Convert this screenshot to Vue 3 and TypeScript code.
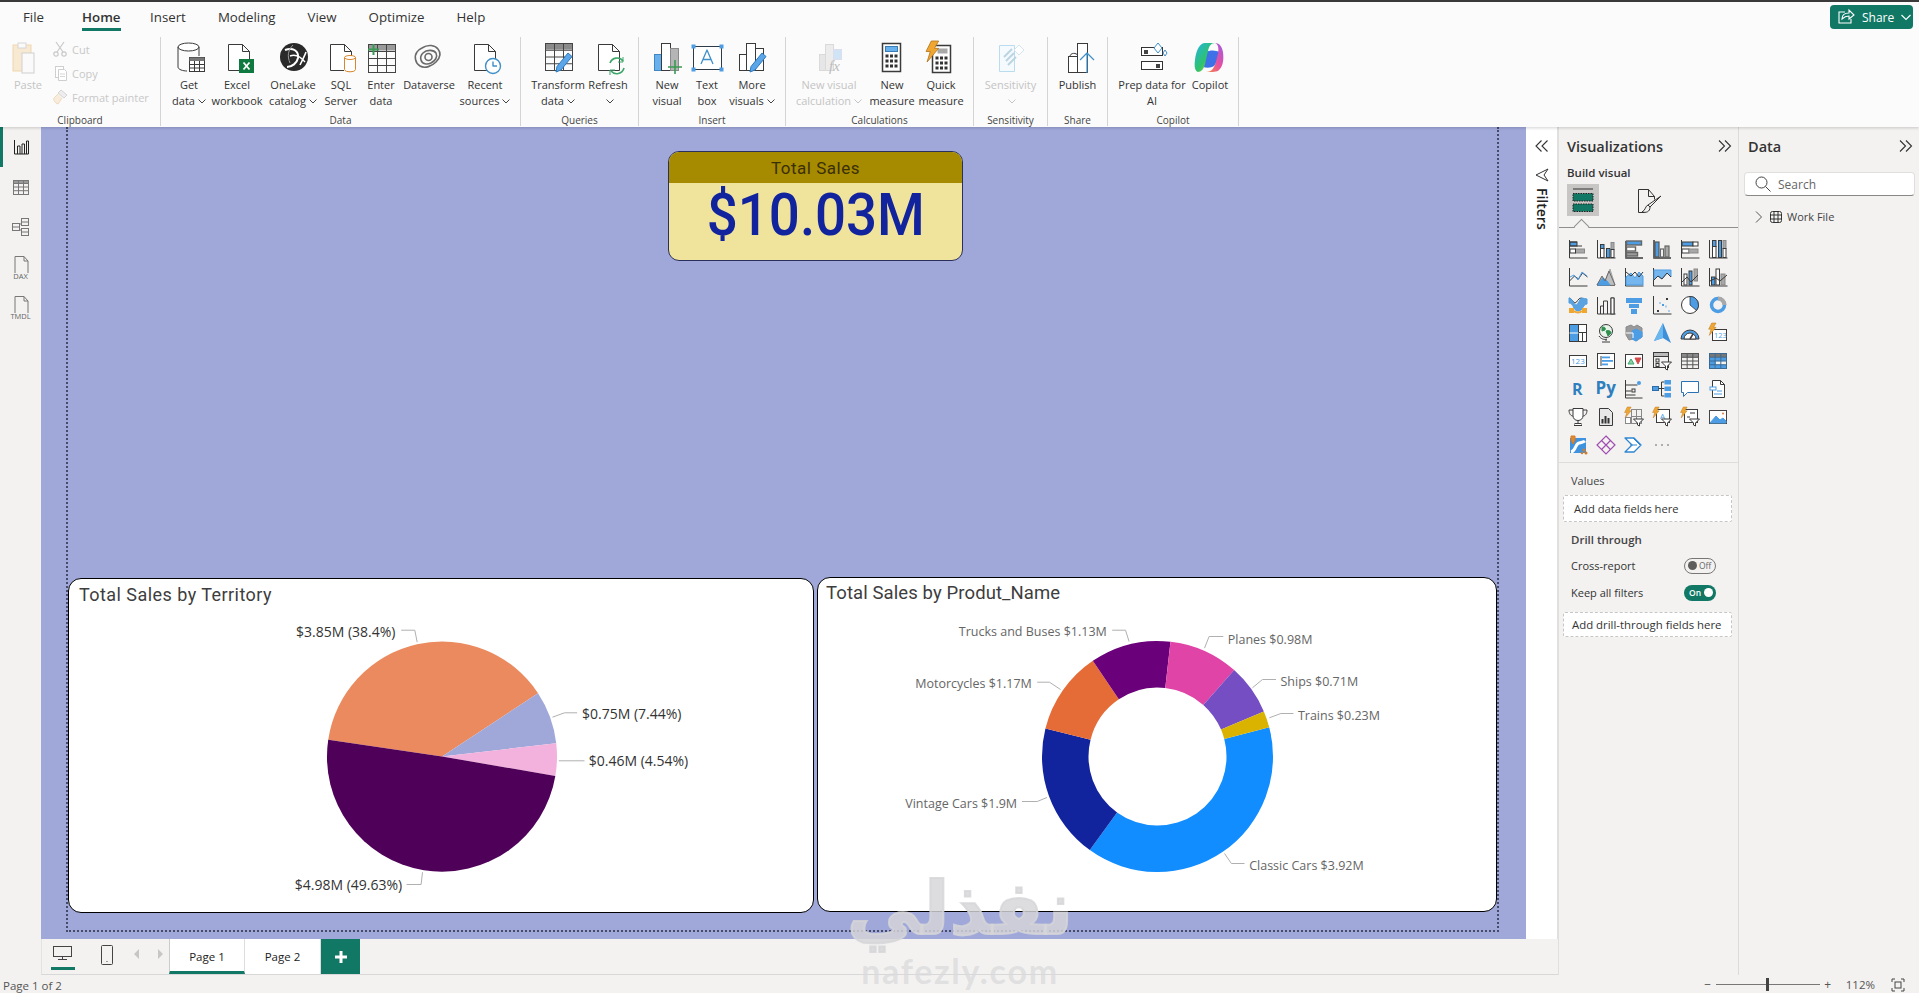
<script setup lang="ts">
const D = '#3a3a3a'
const B = '#4c9de3'
const G = '#a8a8a8'
const Y = '#f0a732'
const W = '#ffffff'
const r = (x: number, y: number, w: number, h: number, f = 'none', s = 'none', sw = 1) =>
  `<rect x="${x}" y="${y}" width="${w}" height="${h}" fill="${f}" stroke="${s}" stroke-width="${sw}"/>`
const p = (d: string, s = D, f = 'none', sw = 1) =>
  `<path d="${d}" stroke="${s}" fill="${f}" stroke-width="${sw}" stroke-linejoin="round"/>`
const c = (x: number, y: number, rad: number, f = 'none', s = 'none', sw = 1) =>
  `<circle cx="${x}" cy="${y}" r="${rad}" fill="${f}" stroke="${s}" stroke-width="${sw}"/>`
const t = (x: number, y: number, s: string, size: number, f: string, extra = '') =>
  `<text x="${x}" y="${y}" font-size="${size}" fill="${f}" font-family="'Open Sans',sans-serif" ${extra}>${s}</text>`

const doc = (x: number, col = D) => p(`M${x + .5} 2.5h14l7 7v19h-21zM${x + 14.5} 2.5v7h7`, col, W)
const cyl = (x: number, y: number, w: number, h: number, col: string) =>
  `<ellipse cx="${x + w / 2}" cy="${y + 2}" rx="${w / 2}" ry="2" fill="none" stroke="${col}"/>` +
  p(`M${x} ${y + 2}v${h - 4}c0 3 ${w} 3 ${w} 0v-${h - 4}`, col, 'none', 1)
const grid = (x: number, y: number, w: number, h: number, cols: number, rows: number, col = D) => {
  let s = r(x + .5, y + .5, w, h, 'none', col)
  for (let i = 1; i < cols; i++) s += p(`M${x + .5 + (w * i) / cols} ${y}v${h}`, col)
  for (let i = 1; i < rows; i++) s += p(`M${x} ${y + .5 + (h * i) / rows}h${w}`, col)
  return s
}
const bolt = (x: number, y: number, k = 1, f = Y) =>
  `<path transform="translate(${x} ${y}) scale(${k})" d="M6 0h7L9 7h4L2 20l3-10H1z" fill="${f}" stroke="#b5761c" stroke-width=".8"/>`
const pencil = (x: number, y: number) =>
  `<path transform="translate(${x} ${y})" d="M12 0l4 3.500L5 17l-5 2 1-5.500z" fill="#5aa6e8" stroke="#2e79bd"/>`

const rib: Record<string, string> = {
  paste: r(1, 3, 18, 26, '#f8e9d2', '#efd6b0') + r(6, 1, 8, 5, '#fafafa', '#d6d6d6') + r(10, 11, 12, 20, '#fafafa', '#cfcfcf'),
  getdata: `<ellipse cx="15.500" cy="5" rx="10.500" ry="4" fill="#fff" stroke="${D}"/>` + p('M5 5v20c0 2.500 5 4 9 4', D) + p('M26 5v9', D) + r(16.5, 15.5, 15, 14, W, D) + r(16.5, 15.5, 15, 3.5, '#777') + p('M21.500 19v10M26.500 19v10M17 22.500h14M17 26h14', D),
  excel: doc(7) + r(18, 17, 15, 14, '#10793f') + p('M22.500 20.500l6 7M28.500 20.500l-6 7', W, 'none', 1.8),
  onelake: c(17, 15, 14, '#2a2a2a') + p('M8 8c8-3 14 1 13 8-1 5-6 9-11 9', W, 'none', 2) + p('M16 3c-5 5-6 11-3 18', '#9a9a9a', 'none', 1) + p('M23 23c3-6 5-10 6-13', W, 'none', 1.600) + p('M13 14c5-2 10 0 15 6', W, 'none', 1.400),
  sql: doc(5) + r(19, 14, 12, 16, W) + cyl(19.5, 13.5, 11, 16, '#d9862c'),
  enter: r(3.5, 2.5, 27, 6, '#9a9a9a') + grid(3, 2, 27, 28, 3, 4, '#444') + p('M8.500 2v11M3 7.500h11', '#3a9a54', 'none', 2),
  dataverse: `<g fill="none" stroke="#6a6a6a" stroke-width="1.600"><path d="M9 6c6-4 13-3 16 1 4 5 1 10-2 13-4 4-11 7-16 4C2 21 1 14 4 10c1-2 3-3 5-4z"/><path d="M10 11c4-4 11-3 13 0 2 4-1 8-5 10-4 2-9 1-10-3-1-3 0-5 2-7z"/><circle cx="15.500" cy="15" r="3.500"/></g>`,
  recent: doc(5) + c(24, 24, 7.5, W, '#3f8fc9', 1.400) + p('M24 19.500v4.500h4', '#3f8fc9', 'none', 1.400),
  transform: r(3.5, 1.5, 27, 6, '#8a8a8a') + grid(3, 1, 27, 27, 3, 4, '#444') + pencil(14, 11),
  refresh: doc(6) + `<g fill="none" stroke="#3fa66b" stroke-width="1.600"><path d="M18 21a7.500 7.500 0 0 1 13-2"/><path d="M32 26a7.500 7.500 0 0 1-13 3"/></g>` + p('M31 15v5h-5', '#3fa66b') + p('M18 33v-5h5', '#3fa66b'),
  newvisual: r(3.5, 12.5, 7, 16, '#69b1ec', '#3d87c6') + r(10.5, 1.5, 9, 27, W, D) + r(19.5, 6.5, 8, 22, '#b5b5b5', '#8a8a8a') + p('M24 18v14M17 25h14', '#3a9a54', 'none', 1.600),
  textbox: r(2.5, 4.5, 28, 23, W, '#2e3a46', 1) + r(.5, 2.5, 4, 4, B) + r(28.5, 2.5, 4, 4, B) + r(.5, 25.5, 4, 4, B) + r(28.5, 25.5, 4, 4, B) + p('M10 22l6-14 6 14M12 17.500h8', '#3f8fc9', 'none', 1.300),
  more: r(3.5, 12.5, 7, 16, W, D) + r(10.5, 1.5, 9, 27, W, D) + r(19.5, 6.5, 8, 22, W, D) + pencil(14, 11),
  calc: r(6.5, 12.5, 6, 16, '#e6e6e6', '#dadada') + r(12.5, 2.5, 8, 26, '#ececec', '#dadada') + r(20.5, 7.5, 8, 10, '#cfe4f5', '#dde') + t(16, 29, 'fx', 15, '#bdbdbd', `font-style="italic" style="font-family:'Liberation Serif',serif"`),
  measure: r(6.5, 1.5, 18, 28, W, D, 1.500) + r(9.5, 4.5, 12, 5, '#69b1ec', '#3a7cb5') + Array.from({ length: 9 }, (_, i) => r(9.5 + (i % 3) * 4.5, 12.5 + Math.floor(i / 3) * 5, 3, 3, '#333')).join(''),
  quick: r(7.5, 3.5, 18, 27, W, D, 1.500) + r(12.5, 6.5, 10, 5, '#a8a8a8') + Array.from({ length: 9 }, (_, i) => r(10.5 + (i % 3) * 4.5, 14.5 + Math.floor(i / 3) * 5, 3, 3, '#333')).join('') + bolt(0, -1, 1.05),
  sens: p('M4.500 3.500h15v26h-15z', '#b9dcef', '#f4fafd') + p('M9 15l8-8M11 19l8-8M13 23l8-8', '#bcd4e2', 'none', 2) + p('M19 8l5-5 5 5-5 5z', '#d4e4ee', W),
  publish: r(6.5, 14.5, 9, 16, W, D) + r(15.5, 1.5, 10, 29, W, D) + p('M8 14.500c0-4 7-4 7.500-1', D) + p('M25 31V11M18 18l7-7 7 7', '#3f8fc9', 'none', 1.200),
  prep: r(5.5, 5.5, 21, 8, W, '#333') + r(8, 8, 4, 4, '#444') + r(5.5, 19.500, 21, 8, W, '#333') + r(20, 22, 4, 4, '#444') + p('M22 1l4 5-4 5-4-5zM29 8l2 3-2 3-2-3z', '#3f8fc9', W),
  copilot: `<defs><linearGradient id="cpa" x1="0" y1="0" x2="1" y2="1"><stop offset="0" stop-color="#23b3e8"/><stop offset=".55" stop-color="#2fc36a"/><stop offset="1" stop-color="#f4d21f"/></linearGradient><linearGradient id="cpb" x1="1" y1="0" x2="0" y2="1"><stop offset="0" stop-color="#9a5ee8"/><stop offset=".5" stop-color="#e84e9f"/><stop offset="1" stop-color="#f58a3c"/></linearGradient></defs><path d="M12 10c4-2 9-2 14 0-2 5-3 11-6 14-3 2-7 2-11 1 2-4 2-10 3-15z" fill="#3e70e8"/><path d="M11 1h10c-4 0-6 3-7 8l-3 13c-1 5-4 8-7 8-3-1-4-5-3-12C2 8 6 1 11 1z" fill="url(#cpa)"/><path d="M21 1c5 0 7 4 8 9 1 8 0 14-4 18-2 2-6 2-13 2 6 0 8-4 10-10l2-9c1-5 0-9-3-10z" fill="url(#cpb)"/>`,
}

const sm: Record<string, string> = {
  cut: `<g fill="none" stroke="#c9c9c9" stroke-width="1.200"><path d="M4 1l7 10M12 1L5 11"/><circle cx="4" cy="13" r="2.200"/><circle cx="12" cy="13" r="2.200" /></g>`,
  copy: r(3.5, 1.5, 8, 11, W, '#cfcfcf') + p('M6.500 4.500h6l2 2v9h-8z', '#cfcfcf', W) + p('M8 9h5M8 11.500h5', '#d6d6d6'),
  paint: p('M9 1l6 5-3 3-6-5z', '#d5d5d5', '#eee') + p('M6 5L2 9c-1 2 1 5 4 6l4-6', '#f0d9ba', '#f8eddc'),
}

const axis = p('M1.500 1v18h18')
const vi: string[] = [
  axis + r(2, 3, 7, 4, B, D) + r(9, 3, 0, 4) + p('M2 7h12', D) + r(7.500, 10, 9, 4, G, '#888') + r(2, 10, 5.5, 4, W, D) + p('M2 3h7', D),
  axis + r(4.5, 9.5, 3.500, 9, W, D) + r(4.5, 5.5, 3.500, 4, B, D) + r(10.5, 9.5, 3.500, 9, B, D) + r(15, 3.5, 3, 7, G, '#888') + r(15, 10.500, 3, 8, W, D),
  p('M2 2v17h17', '#666', 'none', 2) + r(2.5, 2, 15, 4, B, '#666', 1.400) + r(2.5, 8, 9, 4, W, '#666', 1.400) + r(2.500, 13.5, 11, 3.500, '#9a9a9a', '#666', 1.400),
  p('M2 1v18h17', '#666', 'none', 2) + r(3, 3, 4, 15, B, '#555', 1.200) + r(8.5, 10, 3, 8, W, '#666', 1.200) + r(13, 7, 4, 11, G, '#666', 1.200),
  axis + r(2, 3, 11, 4, B, D) + r(13, 3, 5, 4, W, D) + r(2, 10, 7, 4, W, D) + r(9, 10, 9, 4, G, '#888'),
  axis + r(4.5, 7.5, 3.500, 11, W, D) + r(4.5, 1.5, 3.500, 6, B, D) + r(10.5, 1.5, 3, 17, B, D) + r(15, 1.5, 3, 8, G, '#888') + r(15, 9.500, 3, 9, W, D),
  axis + p('M1.500 14l5-5 4 3 4-6 5 4', D) + p('M2 10l4-2 4 5 4-8 5 4', '#4c9de3'),
  p('M1 18.500h18', D) + p('M1 18l5-8 3 4 5-12 5 16v0z', G, '#bdbdbd') + p('M1 18l6-7 4 3 3 4z', B, B) + p('M1 18l5-9 3 5 4-10 6 14', '#6a6a6a'),
  axis + p('M2 10l5-4 4 5 4-6 4 4v9H2z', B, '#75b6ee') + p('M2 5l5 4 4-4 4 5 4-5', D) ,
  axis + p('M2 3h17v7l-4-4-5 6-4-3-4 4z', B, '#75b6ee') + p('M2 13l4-4 4 3 5-6 4 4', D),
  axis + r(4, 7, 3, 11, W, D) + r(9, 4, 3, 14, B, D) + r(14, 2, 3.500, 12, G, '#888') + p('M2 15l5-5 4 5 7-7', D),
  axis + r(3.500, 10, 3.500, 8, B, D) + r(8, 2, 3.500, 16, W, D) + r(13, 7, 4, 11, G, '#888') + p('M2 14l6-3 4 3 7-6', D),
  p('M1 3c3 0 4 5 6 5s3-5 6-5 3 4 6 4', D) + p('M1 3c3 0 5 7 7 7s4-7 6-7 3 1 5 1v5c-4 0-4 7-9 7S6 8 1 8z', B, '#5aa3e0') + r(1, 13, 5, 5, Y) + r(14, 13, 5, 5, Y) + p('M6 16c2 2 6 2 8 0', Y, 'none', 2),
  p('M1.500 2v17h18', D) + p('M4.500 19v-8h3v8M7.500 19v-13h4v13M11.500 19v-5M15 19v-16h3v16', D) + r(15, 3, 3, 16, W, D),
  r(2, 3, 16, 5, B) + r(5, 9, 10, 4, B) + r(7, 14, 6, 5, B),
  axis + r(5, 15, 2, 2, D) + r(7, 7, 2, 2, '#aacdee') + r(10, 9, 2, 2, B) + r(13, 10.5, 2, 2, '#aacdee') + r(14, 3, 2, 2, D) + r(16, 15, 2, 2, '#aacdee'),
  c(10, 10, 8.5, W, D) + `<path d="M10 10V1.500a8.500 8.500 0 0 1 6.500 14z" fill="${B}" stroke="${D}" stroke-width=".8"/>`,
  c(10, 10, 6.5, 'none', B, 3.500) + `<path d="M10 1.500a8.500 8.500 0 0 1 8.500 8.500h-4a4.500 4.500 0 0 0-4.500-4.500z" fill="${G}"/>`,
  r(1.500, 1.500, 9, 17, B, D) + r(10.5, 1.500, 8, 8, W, D) + r(10.5, 9.500, 4, 9, W, D) + r(14.5, 9.500, 4, 9, W, D) + p('M1.500 10h9', W),
  c(10, 8, 6.500, '#e9f3ea', D) + p('M6 4c3 0 4 1 3 3l-3 1zM10 8c3-1 5 0 5 2l-3 3z', '#2f8f4e', '#2f8f4e') + p('M3 13c2 3 5 4 8 3M10 16v2M6 19h8', D),
  p('M2 4l5-2 3 2 3-2 5 3v9l-6 4-3-2-4 1-3-5z', '#8a8a8a', '#9a9a9a') + p('M8 8l4-2 6 3v5l-6 4-4-2z', B, B) + p('M2 10h7v5', W),
  `<path d="M11 0l8 20-8-5-9 3z" fill="#3d8fd8"/><path d="M11 0v15l-9 3z" fill="#69b7ee"/>`,
  p('M1 16a9 9 0 0 1 18 0z', D, B) + p('M4 16a6 6 0 0 1 12 0z', D, W) + p('M10 16l3-5', D, 'none', 1.500),
  r(4.500, 6.500, 14, 11, W, D) + t(6, 15, '123', 7.500, B) + bolt(0, 0, .62),
  r(1.500, 4.500, 17, 11, W, D) + t(3, 13, '123', 8, B),
  r(1.500, 2.500, 17, 15, W, D) + p('M5 5v10', D) + r(6, 5.500, 8, 1.800, B) + r(6, 9, 11, 1.800, B) + r(6, 12.500, 6, 1.800, B),
  r(1.500, 3.500, 17, 13, W, D) + p('M4 13l3-5 3 5z', '#3fa66b', '#8fcfa8') + p('M11 7h6l-3 6z', '#d84a4a', '#d84a4a'),
  r(1.500, 1.500, 15, 4, '#bbb', D) + r(1.500, 1.500, 15, 15, 'none', D) + r(4, 8, 3, 3, 'none', D) + r(4, 12.500, 3, 3, 'none', D) + p('M9.500 11h10l-4 4v4l-2-1v-3z', D, W),
  r(1.500, 2.500, 17, 4, '#8a8a8a') + grid(1, 2, 17, 15, 3, 4, '#555'),
  r(1.500, 2.500, 17, 4, '#777') + r(1.500, 6.500, 6, 11, B) + r(7.500, 6.500, 11, 3.600, B) + r(7.500, 13.700, 11, 3.600, B) + grid(1, 2, 17, 15, 3, 4, '#3a6a92'),
  t(4, 16, 'R', 16, '#2f7fbf', 'font-weight="700"'),
  t(-.5, 15, 'Py', 17, '#2f7fbf', 'font-weight="700"'),
  p('M1.500 1v18h17M1.500 6h12M1.500 12h6M1.500 16h10', D) + c(15, 4, 2, B) + r(8, 10, 3, 3, 'none', D),
  r(.5, 7.5, 6, 4, B, '#2d6ea8') + p('M6.500 9.500h3M9.500 3v14h3M9.500 9.500h3M9.500 3h3', D) + r(12.5, 1, 6.500, 4.500, B) + r(12.5, 7.5, 6.500, 4.500, B) + r(12.5, 14, 6.500, 4.500, B),
  p('M1.500 2.500h17v11h-11l-4 4v-4h-2z', '#2a72b3', W),
  p('M4.500 1.500h8l4 4v13h-12z', D, W) + p('M12.500 1.500v4h4', D) + r(2, 8, 6, 3, W, B) + p('M9 12h5M6 15h8', B),
  p('M5 1.500h10v7c0 3-2 5-5 5s-5-2-5-5z', D, W) + p('M5 3H1c0 4 2 6 4 6M15 3h4c0 4-2 6-4 6M10 13.500v3M6 18.500h8', D) + r(7, 16.500, 6, 2, W, D),
  p('M3.500 1.500h9l4 4v13h-13z', D, '#e8e8e8') + r(5.500, 12, 2, 4.500, '#333') + r(8.500, 9, 2, 7.500, '#333') + r(11.500, 11, 2, 5.500, '#333'),
  grid(7, 2, 10, 14, 2, 2, '#888') + bolt(0, 0, .55) + r(1.500, 10.500, 5, 6, W, '#888') + p('M9.500 12h10l-4 4v3l-2-1v-2z', D, W),
  r(4.500, 2.500, 13, 13, W, D) + t(8, 12, 'A', 8, B) + bolt(0, 0, .55) + p('M9.500 12h10l-4 4v3l-2-1v-2z', D, W),
  r(4.500, 2.500, 13, 13, W, D) + p('M10 6h5M7 10h3', D) + bolt(0, 0, .55) + p('M9.500 12h10l-4 4v3l-2-1v-2z', D, W),
  r(1.500, 3.500, 17, 13, W, '#444') + p('M2 16l6-7 4 4 3-2 3 3v2z', B, B) + c(15, 6.500, 1, '#e07b39'),
  r(2, 3, 16, 15, '#3f93de') + p('M3 17c5-1 4-8 8-9 3-1 5-1 6-2', W, 'none', 3) + p('M3 1h4v4L5 9 3 5z', '#d47a25', '#e08a2e') + c(16, 15, 1.500, '#d47a25') + c(18, 18, 1.500, '#d47a25') + c(14, 18, 1.200, '#d47a25'),
  `<g fill="none" stroke="#a04db0" stroke-width="1.200"><path d="M10 1l9 9-9 9-9-9z"/><path d="M5.500 5.500l9 9M14.500 5.500l-9 9"/></g>`,
  p('M1 3h9l7 7-7 7H1l7-7z', '#2f86d0', W, 1.300) + p('M6 10h7M9 3l7 7', '#2f86d0'),
  c(4, 10, .8, '#555') + c(10, 10, .8, '#555') + c(16, 10, .8, '#555'),
]

type Item = { w: number; icon: string; lines: string[]; chev?: boolean }
type Group = { name: string; w: number; pad: number; items: Item[] }
const groups: Group[] = [
  { name: 'Data', w: 360, pad: 4, items: [
    { w: 48, icon: 'getdata', lines: ['Get', 'data'], chev: true },
    { w: 48, icon: 'excel', lines: ['Excel', 'workbook'] },
    { w: 64, icon: 'onelake', lines: ['OneLake', 'catalog'], chev: true },
    { w: 32, icon: 'sql', lines: ['SQL', 'Server'] },
    { w: 48, icon: 'enter', lines: ['Enter', 'data'] },
    { w: 48, icon: 'dataverse', lines: ['Dataverse'] },
    { w: 64, icon: 'recent', lines: ['Recent', 'sources'], chev: true },
  ] },
  { name: 'Queries', w: 118, pad: 4, items: [
    { w: 66, icon: 'transform', lines: ['Transform', 'data'], chev: true },
    { w: 34, icon: 'refresh', lines: ['Refresh', ''], chev: true },
  ] },
  { name: 'Insert', w: 147, pad: 8, items: [
    { w: 40, icon: 'newvisual', lines: ['New', 'visual'] },
    { w: 40, icon: 'textbox', lines: ['Text', 'box'] },
    { w: 50, icon: 'more', lines: ['More', 'visuals'], chev: true },
  ] },
  { name: 'Calculations', w: 188, pad: 9, items: [
    { w: 68, icon: 'calc', lines: ['New visual', 'calculation'], chev: true },
    { w: 58, icon: 'measure', lines: ['New', 'measure'] },
    { w: 40, icon: 'quick', lines: ['Quick', 'measure'] },
  ] },
  { name: 'Sensitivity', w: 74, pad: 0, items: [{ w: 74, icon: 'sens', lines: ['Sensitivity', ''], chev: true }] },
  { name: 'Share', w: 60, pad: 0, items: [{ w: 59, icon: 'publish', lines: ['Publish'] }] },
  { name: 'Copilot', w: 131, pad: 2, items: [
    { w: 84, icon: 'prep', lines: ['Prep data for', 'AI'] },
    { w: 32, icon: 'copilot', lines: ['Copilot'] },
  ] },
]
const isOff = (i: string) => i === 'calc' || i === 'sens'

const tabs = ['File', 'Home', 'Insert', 'Modeling', 'View', 'Optimize', 'Help']

const arc = (cx: number, cy: number, ro: number, ri: number, a0: number, a1: number) => {
  const pt = (rad: number, a: number) => {
    const q = ((a - 90) * Math.PI) / 180
    return `${(cx + rad * Math.cos(q)).toFixed(2)} ${(cy + rad * Math.sin(q)).toFixed(2)}`
  }
  const large = a1 - a0 > 180 ? 1 : 0
  if (ri === 0) return `M${cx} ${cy}L${pt(ro, a0)}A${ro} ${ro} 0 ${large} 1 ${pt(ro, a1)}Z`
  return `M${pt(ro, a0)}A${ro} ${ro} 0 ${large} 1 ${pt(ro, a1)}L${pt(ri, a1)}A${ri} ${ri} 0 ${large} 0 ${pt(ri, a0)}Z`
}
const slices = (start: number, vals: [number, string][], cx: number, cy: number, ro: number, ri: number) => {
  const sum = vals.reduce((a, v) => a + v[0], 0)
  let a = start
  return vals.map(([v, col]) => {
    const b = a + (v / sum) * 360
    const s = { d: arc(cx, cy, ro, ri, a, b), col }
    a = b
    return s
  })
}
const pie = slices(278.4, [[38.4, '#EA8A5E'], [7.44, '#A0A8DA'], [4.54, '#F3B1DD'], [49.63, '#4F0058']], 442.5, 757, 115, 0)
const donut = slices(75.3, [[3.92, '#118DFF'], [1.9, '#12239E'], [1.17, '#E66C37'], [1.13, '#6B007B'], [0.98, '#E044A7'], [0.71, '#744EC2'], [0.23, '#D9B300']], 1158, 757, 115.5, 69)

type Lab = { x: number; y: number; s: string; a: string; l: string }
const pieLabels: Lab[] = [
  { x: 396, y: 632, s: '$3.85M (38.4%)', a: 'end', l: 'M401.700 630.700H415.300L417.700 642.700' },
  { x: 582.5, y: 714.7, s: '$0.75M (7.44%)', a: 'start', l: 'M553 717.700L565 713.300H577.700' },
  { x: 589.3, y: 761.7, s: '$0.46M (4.54%)', a: 'start', l: 'M559.300 761.300H585' },
  { x: 402.7, y: 885, s: '$4.98M (49.63%)', a: 'end', l: 'M407 885H421.600L423 872.700' },
]
const donutLabels: Lab[] = [
  { x: 1107.3, y: 632, s: 'Trucks and Buses $1.13M', a: 'end', l: 'M1112.700 630.700H1126L1129.600 642' },
  { x: 1228.3, y: 640, s: 'Planes $0.98M', a: 'start', l: 'M1205 648.700L1209.600 637H1223.800' },
  { x: 1281, y: 682, s: 'Ships $0.71M', a: 'start', l: 'M1252.900 688.300L1263 680H1276.500' },
  { x: 1298.4, y: 716, s: 'Trains $0.23M', a: 'start', l: 'M1269.800 718.300L1281.400 714H1294' },
  { x: 1032.3, y: 684, s: 'Motorcycles $1.17M', a: 'end', l: 'M1037.700 682.700H1050L1061 690' },
  { x: 1017.6, y: 804, s: 'Vintage Cars $1.9M', a: 'end', l: 'M1022.500 802H1037.700L1047.500 798' },
  { x: 1249.7, y: 866, s: 'Classic Cars $3.92M', a: 'start', l: 'M1225 854L1231.900 864H1245' },
]
</script>

<template>
  <div class="app">
    <header class="ribbon">
      <div class="tabrow">
        <nav class="tabs">
          <span v-for="tb in tabs" :key="tb" class="tab" :class="{ active: tb === 'Home' }">{{ tb }}</span>
        </nav>
        <button class="share">
          <svg width="18" height="18" viewBox="0 0 18 18" fill="none" stroke="#fff" stroke-width="1.100"><path d="M8 4H2v11h12v-4" /><path d="M5 11c0-4 3-6 7-6V2l5 5-5 4V8c-3 0-5 1-7 3z" /></svg>
          <span>Share</span>
          <svg width="10" height="7" viewBox="0 0 10 7" fill="none" stroke="#fff" stroke-width="1.100"><path d="M.5 1l4.500 4.500L9.500 1" /></svg>
        </button>
      </div>
      <div class="groups">
        <section class="group clip">
          <div class="clipbody">
            <div class="rbtn paste">
              <svg class="ico" viewBox="0 0 32 32" v-html="rib.paste" />
              <div class="lbl off">Paste</div>
            </div>
            <ul class="clipcol">
              <li><svg width="16" height="16" viewBox="0 0 16 16" v-html="sm.cut" />Cut</li>
              <li><svg width="16" height="16" viewBox="0 0 16 16" v-html="sm.copy" />Copy</li>
              <li><svg width="16" height="16" viewBox="0 0 16 16" v-html="sm.paint" />Format painter</li>
            </ul>
          </div>
          <div class="gname">Clipboard</div>
        </section>
        <section v-for="g in groups" :key="g.name" class="group" :style="{ width: g.w + 'px' }">
          <div class="gbody" :style="{ paddingLeft: g.pad + 'px' }">
            <div v-for="it in g.items" :key="it.icon" class="rbtn" :style="{ width: it.w + 'px' }">
              <svg class="ico" viewBox="0 0 32 32" v-html="rib[it.icon]" />
              <div class="lbl" :class="{ off: isOff(it.icon) }" v-for="(ln, i) in it.lines" :key="i">
                {{ ln }}<svg v-if="it.chev && i === it.lines.length - 1" class="chev" width="8" height="5" viewBox="0 0 8 5"><path d="M.5.5L4 4 7.500.5" fill="none" :stroke="isOff(it.icon) ? '#c4c4c4' : '#444'" /></svg>
              </div>
            </div>
          </div>
          <div class="gname">{{ g.name }}</div>
        </section>
      </div>
    </header>

    <main class="main">
      <aside class="leftnav">
        <div class="navitem on">
          <svg width="20" height="20" viewBox="0 0 20 20" fill="none" stroke="#222"><path d="M3.500 3v14h14M6.500 17V9h2.500v8M11 17V7h2.500v10M15.500 17V4" /><path d="M15.500 4h2v13" /></svg>
        </div>
        <div class="navitem">
          <svg width="20" height="20" viewBox="0 0 20 20" fill="none" stroke="#777"><rect x="2.500" y="3.500" width="15" height="14" /><rect x="2.500" y="3.500" width="15" height="3" fill="#999" /><path d="M7.500 3.500v14M12.500 3.500v14M2.500 10h15M2.500 13.700h15" /></svg>
        </div>
        <div class="navitem">
          <svg width="20" height="20" viewBox="0 0 20 20" fill="none" stroke="#777"><rect x="1.500" y="6.500" width="7" height="7" /><rect x="10.500" y="1.500" width="7" height="7" /><rect x="10.500" y="11.500" width="7" height="7" /><path d="M1.500 10h7M10.500 5h7M10.500 15h7M8.500 8l2-2M8.500 12l2 2" /></svg>
        </div>
        <div class="navitem doc">
          <svg width="20" height="24" viewBox="0 0 20 24" fill="none" stroke="#777"><path d="M4 18V1.500h9l4 4.500v12M13 1.500V6h4" /></svg>
          <span>DAX</span>
        </div>
        <div class="navitem doc">
          <svg width="20" height="24" viewBox="0 0 20 24" fill="none" stroke="#777"><path d="M4 18V1.500h9l4 4.500v12M13 1.500V6h4" /></svg>
          <span>TMDL</span>
        </div>
      </aside>

      <div class="center">
        <div class="workrow">
          <div class="canvas">
            <div class="page">
              <div class="card">
                <div class="card-h">Total Sales</div>
                <div class="card-v"><span>$10.03M</span></div>
              </div>
              <div class="charts">
                <div class="chart c1">
                  <svg viewBox="69.500 579.500 743 332" width="743" height="332">
                    <text x="79.500" y="601" class="title">Total Sales by Territory</text>
                    <path v-for="s in pie" :key="s.col" :d="s.d" :fill="s.col" />
                    <g v-for="l in pieLabels" :key="l.s">
                      <path :d="l.l" fill="none" stroke="#b0b0b0" />
                      <text :x="l.x" :y="l.y + 5" :text-anchor="l.a" class="lab dark">{{ l.s }}</text>
                    </g>
                  </svg>
                </div>
                <div class="chart c2">
                  <svg viewBox="818.500 578.500 677 332" width="677" height="332">
                    <text x="826.500" y="599" class="title t2">Total Sales by Produt_Name</text>
                    <path v-for="s in donut" :key="s.col" :d="s.d" :fill="s.col" />
                    <g v-for="l in donutLabels" :key="l.s">
                      <path :d="l.l" fill="none" stroke="#b0b0b0" />
                      <text :x="l.x" :y="l.y + 4.500" :text-anchor="l.a" class="lab">{{ l.s }}</text>
                    </g>
                  </svg>
                </div>
              </div>
            </div>
          </div>
          <aside class="filters">
            <svg width="14" height="12" viewBox="0 0 14 12" fill="none" stroke="#333" stroke-width="1.100"><path d="M6.500.5L1 6l5.500 5.500M12.500.5L7 6l5.500 5.500" /></svg>
            <svg class="fun" width="14" height="14" viewBox="0 0 14 14" fill="none" stroke="#333"><path d="M13 1L1 7l12 6-4-6z" /></svg>
            <div class="ftext">Filters</div>
          </aside>
        </div>
        <div class="pagebar">
          <div class="dev active">
            <svg width="20" height="16" viewBox="0 0 20 16" fill="none" stroke="#444"><rect x=".5" y="1.500" width="18" height="10" /><path d="M9.500 11.500v3M5 14.500h9" /></svg>
          </div>
          <div class="dev">
            <svg width="14" height="20" viewBox="0 0 14 20" fill="none" stroke="#444"><rect x="1.500" y=".5" width="11" height="19" rx="1" /><path d="M6.500 16.500h1" /></svg>
          </div>
          <svg class="pg-arrows" width="34" height="10" viewBox="0 0 34 10" fill="#c8c6c4"><path d="M5 0v10L0 5zM24 0v10l5-5z" /></svg>
          <div class="ptab sel">Page 1</div>
          <div class="ptab">Page 2</div>
          <div class="padd">
            <svg width="12" height="12" viewBox="0 0 12 12" stroke="#fff" stroke-width="3"><path d="M6 0v12M0 6h12" /></svg>
          </div>
        </div>
      </div>

      <aside class="viz">
        <div class="ptitle"><span>Visualizations</span>
          <svg width="14" height="12" viewBox="0 0 14 12" fill="none" stroke="#333" stroke-width="1.100"><path d="M1 .5L6.500 6 1 11.500M7 .5L12.500 6 7 11.500" /></svg>
        </div>
        <div class="build">Build visual</div>
        <div class="buildtabs">
          <div class="bsel">
            <svg width="28" height="28" viewBox="0 0 28 28"><path d="M4 3h20" stroke="#333" /><rect x="4" y="7.500" width="20" height="7.500" fill="#117865" stroke="#222" stroke-dasharray="1.500 1" /><rect x="4" y="18" width="20" height="7.500" fill="#117865" stroke="#222" stroke-dasharray="1.500 1" /></svg>
          </div>
          <svg class="fmt" width="26" height="28" viewBox="0 0 26 28" fill="none" stroke="#333"><path d="M2.500 25.500V2.500h10l6 7v3M12.500 2.500v7h6M2.500 25.500h6" /><path d="M25 9L14 20l-2-2z" /><path d="M12 18c-3 1-2 5-6 7 4 1 8 0 8-5" /></svg>
        </div>
        <div class="rule"><i /></div>
        <div class="vgrid">
          <svg v-for="(ic, i) in vi" :key="i" class="vic" width="20" height="20" viewBox="0 0 20 20" v-html="ic" />
        </div>
        <div class="sep" />
        <div class="vlabel">Values</div>
        <div class="well">Add data fields here</div>
        <div class="vlabel strong">Drill through</div>
        <div class="trow"><span>Cross-report</span>
          <span class="tog offt"><i />Off</span>
        </div>
        <div class="trow k"><span>Keep all filters</span>
          <span class="tog ont">On<i /></span>
        </div>
        <div class="well w2">Add drill-through fields here</div>
      </aside>

      <aside class="data">
        <div class="ptitle"><span>Data</span>
          <svg width="14" height="12" viewBox="0 0 14 12" fill="none" stroke="#333" stroke-width="1.100"><path d="M1 .5L6.500 6 1 11.500M7 .5L12.500 6 7 11.500" /></svg>
        </div>
        <div class="search">
          <svg width="16" height="16" viewBox="0 0 16 16" fill="none" stroke="#444"><circle cx="6.500" cy="6.500" r="5.500" /><path d="M10.500 10.500l5 5" /></svg>
          <span>Search</span>
        </div>
        <div class="tree">
          <svg width="8" height="12" viewBox="0 0 8 12" fill="none" stroke="#555"><path d="M1 .5L6.500 6 1 11.500" /></svg>
          <svg class="tbl" width="12" height="12" viewBox="0 0 12 12" fill="none" stroke="#333"><rect x=".5" y=".5" width="11" height="11" rx="2" /><path d="M4 .5v11M8 .5v11M.5 4h11M.5 8h11" /></svg>
          <span>Work File</span>
        </div>
      </aside>
    </main>

    <footer class="status">
      <span>Page 1 of 2</span>
      <div class="zoomctl">
        <span class="zm">−</span>
        <span class="slider"><i /></span>
        <span class="zm">+</span>
        <span class="pct">112%</span>
        <svg width="14" height="14" viewBox="0 0 14 14" fill="none" stroke="#444"><path d="M1 4V1h3M10 1h3v3M13 10v3h-3M4 13H1v-3" /><rect x="4" y="4" width="6" height="6" /></svg>
      </div>
    </footer>

    <div class="mark" aria-hidden="true">
      <div class="mark-ar">نفذلي</div>
      <div class="mark-en">nafezly.com</div>
    </div>
  </div>
</template>

<style>
html, body { margin: 0; background: #f3f2f1; }
</style>

<style scoped>
* { box-sizing: border-box; }
.app {
  position: relative;
  width: 1919px;
  height: 993px;
  overflow: hidden;
  display: flex;
  flex-direction: column;
  font-family: "Open Sans", "Noto Sans", sans-serif;
  color: #333;
  background: #f3f2f1;
}
.ribbon {
  height: 127px;
  flex: none;
  background: #fbfbfb;
  border-top: 2px solid #3a3a3a;
  position: relative;
  z-index: 2;
  box-shadow: 0 1px 3px rgba(0, 0, 0, .18);
}
.tabrow { height: 35px; display: flex; justify-content: space-between; }
.tabs { display: flex; padding-left: 23px; gap: 32px; font-size: 13.300px; }
.tab { height: 29px; padding-top: 7px; line-height: 17px; color: #333; }
.tab:first-child { margin-right: 6px; }
.tab.active { font-weight: 600; border-bottom: 3px solid #117865; height: 29px; margin-right: -2.500px; }
.share {
  margin: 3px 6px 0 0;
  width: 83px;
  height: 24px;
  background: #117865;
  color: #fff;
  border: 0;
  border-radius: 4px;
  display: flex;
  align-items: center;
  gap: 7px;
  padding: 0 0 0 7px;
  font: 12px "Open Sans", sans-serif;
}
.groups { display: flex; height: 90px; }
.group { display: flex; flex-direction: column; border-right: 1px solid #d4d4d4; height: 89px; }
.clip { width: 161px; }
.clipbody { display: flex; flex: 1; padding-left: 6px; min-height: 0; }
.gbody { display: flex; flex: 1; min-height: 0; }
.rbtn { display: flex; flex-direction: column; align-items: center; padding-top: 5px; white-space: nowrap; }
.rbtn.paste { width: 44px; }
.ico { width: 32px; height: 32px; margin-bottom: 3px; flex: none; overflow: visible; }
.lbl { font-size: 11px; line-height: 16px; height: 16px; color: #333; display: flex; align-items: center; justify-content: center; }
.lbl.off { color: #c4c4c4; }
.chev { margin-left: 3px; }
.clipcol { list-style: none; margin: 0 0 0 2px; padding: 0; font-size: 11px; color: #c8c8c8; }
.clipcol li { height: 24px; display: flex; align-items: center; gap: 4px; white-space: nowrap; }
.gname { font-size: 10px; height: 12px; line-height: 12px; text-align: center; color: #444; flex: none; }

.main { flex: 1; display: flex; min-height: 0; }
.leftnav { width: 41px; flex: none; background: #f3f2f1; display: flex; flex-direction: column; }
.navitem { height: 40px; display: flex; align-items: center; justify-content: center; position: relative; margin-bottom: 0; }
.navitem.on { box-shadow: inset 3px 0 0 #117865; }
.navitem.doc span { position: absolute; font-size: 7.500px; line-height: 10px; color: #666; top: 24px; left: 0; right: 0; text-align: center; }
.center { width: 1517px; flex: none; display: flex; flex-direction: column; }
.workrow { height: 812px; display: flex; flex: none; }
.canvas { width: 1485px; background: #a0a8da; padding-left: 25px; overflow: hidden; flex: none; }
.page {
  width: 1433px;
  height: 805px;
  border: 2px dotted #454b68;
  border-top: 0;
  display: flex;
  flex-direction: column;
  justify-content: space-between;
}
.card {
  margin: 24px 0 0 600px;
  width: 295px;
  height: 110px;
  border: 1px solid #2a2f5c;
  border-radius: 11px;
  background: #f0e49c;
  overflow: hidden;
}
.card-h {
  height: 31px;
  background: #a68a00;
  font: 17px/33px Roboto, sans-serif;
  letter-spacing: .5px;
  color: #3a2f05;
  text-align: center;
}
.card-v {
  font: 500 60px/64px Roboto, sans-serif;
  color: #12239e;
  text-align: center;
}
.card-v span { display: inline-block; transform: scaleX(.91); }
.charts { display: flex; gap: 3px; margin-bottom: 17px; align-items: flex-start; }
.chart { height: 335px; border: 1.500px solid #000; border-radius: 13px; background: #fff; overflow: hidden; flex: none; }
.chart svg { display: block; }
.c1 { width: 746px; margin-top: 1px; }
.c2 { width: 680px; }
.title { font: 18px Roboto, sans-serif; fill: #3d3d3d; letter-spacing: .45px; }
.t2 { font-size: 18.500px; letter-spacing: .1px; }
.lab { font: 12.500px "Open Sans", sans-serif; fill: #666; }
.lab.dark { fill: #333; font-size: 14px; }
.filters { width: 32px; background: #fff; display: flex; flex-direction: column; align-items: center; padding-top: 13px; border-right: 1px solid #e0e0e0; }
.fun { margin-top: 16px; }
.ftext { writing-mode: vertical-rl; font-size: 14px; font-weight: 600; margin-top: 6px; line-height: 18px; color: #222; }
.pagebar { height: 36px; display: flex; align-items: flex-start; background: #f3f2f1; border-bottom: 1px solid #d8d8d8; border-left: 1px solid #e2e2e2; }
.dev { width: 24px; height: 31px; margin: 0 0 0 9px; display: flex; align-items: center; justify-content: center; }
.dev.active { border-bottom: 3px solid #117865; height: 31px; }
.dev + .dev { margin-left: 20px; }
.pg-arrows { margin: 10px 0 0 15px; }
.ptab {
  width: 76px;
  height: 35px;
  background: #fff;
  text-align: center;
  font-size: 11.500px;
  line-height: 36px;
  color: #222;
  border-right: 1px solid #ddd;
}
.ptab.sel { margin-left: 1px; border-left: 1px solid #ccc; border-bottom: 3px solid #117865; }
.padd { width: 39px; height: 35px; background: #117865; display: flex; align-items: center; justify-content: center; }

.viz { width: 181px; flex: none; border-left: 1px solid #e0dfde; border-right: 1px solid #dcdbda; background: #f3f2f1; display: flex; flex-direction: column; }
.ptitle { display: flex; justify-content: space-between; align-items: center; height: 38px; padding: 0 6px 0 8px; font-size: 14.500px; font-weight: 600; color: #333; }
.build { font-size: 11.500px; font-weight: 600; line-height: 16px; padding-left: 8px; color: #333; }
.buildtabs { display: flex; padding-left: 8px; margin-top: 3px; height: 32px; }
.bsel { width: 32px; height: 32px; background: #c8c6c4; padding: 2px; }
.fmt { margin: 3px 0 0 37px; }
.rule { position: relative; height: 1px; background: #8f8f8f; margin-top: 11px; }
.rule i { position: absolute; left: 17px; top: -6px; width: 11px; height: 11px; background: #f3f2f1; border-left: 1px solid #8f8f8f; border-top: 1px solid #8f8f8f; transform: rotate(45deg); }
.vgrid { display: grid; grid-template-columns: repeat(6, 28px); grid-auto-rows: 28px; padding: 7px 0 0 5px; justify-items: center; align-items: center; height: 234px; }
.vic { overflow: visible; }
.sep { height: 1px; background: #dedddc; }
.vlabel { font-size: 11px; padding-left: 12px; line-height: 16px; margin-top: 10px; color: #444; }
.vlabel.strong { font-weight: 600; margin-top: 10px; font-size: 11.500px; }
.well { margin: 6px 6px 0 4px; height: 27px; line-height: 25px; background: #fff; border: 1px dashed #c8c6c4; border-radius: 2px; font-size: 11.200px; padding-left: 10px; white-space: nowrap; color: #333; }
.w2 { margin-top: 6px; height: 25px; line-height: 23px; padding-left: 8px; font-size: 11.400px; }
.trow { display: flex; justify-content: space-between; align-items: center; padding: 0 22px 0 12px; font-size: 11px; height: 27px; margin-top: 4px; color: #333; }
.trow.k { margin-top: 0; }
.tog { width: 32px; height: 16px; border-radius: 8px; display: flex; align-items: center; font-size: 8.500px; padding: 0 3px; gap: 2px; }
.tog i { width: 9px; height: 9px; border-radius: 50%; display: block; }
.offt { border: 1px solid #777; color: #666; }
.offt i { background: #605e5c; }
.ont { background: #117865; color: #fff; justify-content: space-between; padding: 0 3px 0 5px; font-weight: 600; }
.ont i { background: #fff; }

.data { flex: 1; background: #f3f2f1; display: flex; flex-direction: column; }
.data .ptitle { padding-left: 9px; font-size: 14.500px; }
.search { margin: 7px 4px 0 5px; height: 24px; background: #fff; border: 1px solid #e1dfdd; border-bottom-color: #8a8886; border-radius: 4px; display: flex; align-items: center; gap: 7px; padding-left: 10px; font-size: 12px; color: #666; }
.tree { display: flex; align-items: center; margin: 13px 0 0 16px; font-size: 11px; color: #444; }
.tbl { margin: 0 5px 0 7px; }

.status { height: 18px; flex: none; background: #f3f2f1; display: flex; justify-content: space-between; align-items: center; padding: 3px 14px 0 3px; font-size: 11.500px; color: #555; position: relative; }
.zoomctl { display: flex; align-items: center; margin-top: -2px; }
.zm { width: 12px; text-align: center; font-size: 12px; }
.slider { position: relative; width: 104px; height: 1px; background: #777; display: block; margin: 0 2px; }
.slider i { position: absolute; left: 50px; top: -6px; width: 3px; height: 13px; background: #444; }
.pct { margin: 0 16px 0 12px; font-size: 11.500px; }

.mark { position: absolute; z-index: 5; left: 840px; top: 876px; width: 240px; text-align: center; pointer-events: none; color: rgba(214, 214, 216, .82); }
.mark-ar { font: 700 74px/64px "DejaVu Sans", sans-serif; -webkit-text-stroke: 2px rgba(214, 214, 216, .82); }
.mark-en { font: 700 34px/34px Lato, sans-serif; letter-spacing: 1.700px; margin-top: 14px; color: rgba(218, 218, 220, .75); }
</style>
